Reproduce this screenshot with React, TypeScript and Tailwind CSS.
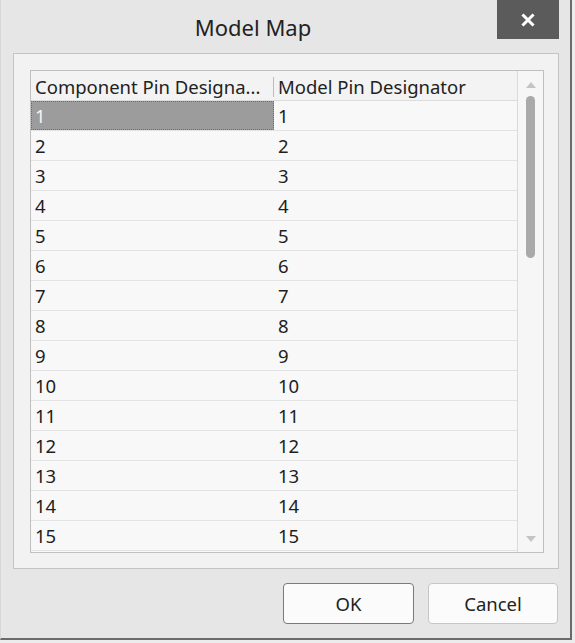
import React from "react";

const rows = Array.from({ length: 15 }, (_, i) => String(i + 1));

export default function App() {
  return (
    <div className="w-[575px] h-[643px] bg-[#ececec] overflow-hidden" style={{ fontFamily: '"Noto Sans", "Open Sans", sans-serif' }}>
      <div className="w-[572px] h-[640px] bg-[#e6e6e6] border-r-2 border-b-2 border-[#6a6a6a] border-l border-l-[#d8d8d8] flex flex-col">
        {/* Title bar */}
        <div className="h-[40px] flex shrink-0">
          <div className="flex-1 flex items-center justify-center pl-[8px] pt-[14px] text-[22px] leading-none text-[#222]">Model Map</div>
          <div className="w-[62px] h-[39px] bg-[#5b5b5b] flex items-center justify-center">
            <svg width="14" height="14" viewBox="0 0 14 14">
              <path d="M2.5 2.5 L11.5 11.5 M11.5 2.5 L2.5 11.5" stroke="#fff" strokeWidth="3" strokeLinecap="square" />
            </svg>
          </div>
          <div className="w-[11px]" />
        </div>
        {/* Panel */}
        <div className="ml-[12px] mt-[13px] w-[546px] h-[516px] bg-[#f2f2f2] border border-[#c4c4c4] pl-[16px] pt-[16px]">
          <div className="w-[514px] h-[483px] border border-[#c0c0c0] bg-[#f8f8f8] flex">
            <div className="flex-1 flex flex-col">
              <div className="h-[30px] flex items-center bg-[#f3f3f3] border-b border-[#dcdcdc] text-[18.5px] text-[#222] pt-[2px]">
                <div className="w-[242px] pl-[4px] whitespace-nowrap overflow-hidden">Component Pin Designa...</div>
                <div className="w-px h-[20px] bg-[#bdbdbd]" />
                <div className="pl-[4px] whitespace-nowrap">Model Pin Designator</div>
              </div>
              {rows.map((r, i) => (
                <div key={r} className="h-[30px] flex border-b border-[#e3e3e3] text-[18.5px] text-[#1e1e1e]">
                  {i === 0 ? (
                    <div className="w-[243px] bg-[#9c9c9c] border border-dotted border-[#6e6e6e] text-[#f4f4f4] flex items-center pl-[3px]">{r}</div>
                  ) : (
                    <div className="w-[243px] flex items-center pl-[4px]">{r}</div>
                  )}
                  <div className="flex items-center pl-[4px]">{r}</div>
                </div>
              ))}
            </div>
            <div className="w-[26px] border-l border-[#dadada] bg-[#f6f6f6] flex flex-col items-center">
              <svg width="10" height="6" viewBox="0 0 10 6" className="mt-[11px]">
                <path d="M0 6 L5 0 L10 6 Z" fill="#c4c4c4" />
              </svg>
              <div className="w-[9px] h-[162px] mt-[8px] rounded-full bg-[#a9a9a9]" />
              <div className="flex-1" />
              <svg width="10" height="6" viewBox="0 0 10 6" className="mb-[10px]">
                <path d="M0 0 L10 0 L5 6 Z" fill="#c4c4c4" />
              </svg>
            </div>
          </div>
        </div>
        {/* Buttons */}
        <div className="flex mt-[14px] pl-[282px] gap-[14px]">
          <button className="w-[131px] h-[41px] rounded-[4px] border border-[#7a7a7a] bg-[#fbfbfb] text-[18.5px] text-[#222]">OK</button>
          <button className="w-[130px] h-[41px] rounded-[4px] border border-[#c6c6c6] bg-[#fbfbfb] text-[18.5px] text-[#222]">Cancel</button>
        </div>
      </div>
    </div>
  );
}
